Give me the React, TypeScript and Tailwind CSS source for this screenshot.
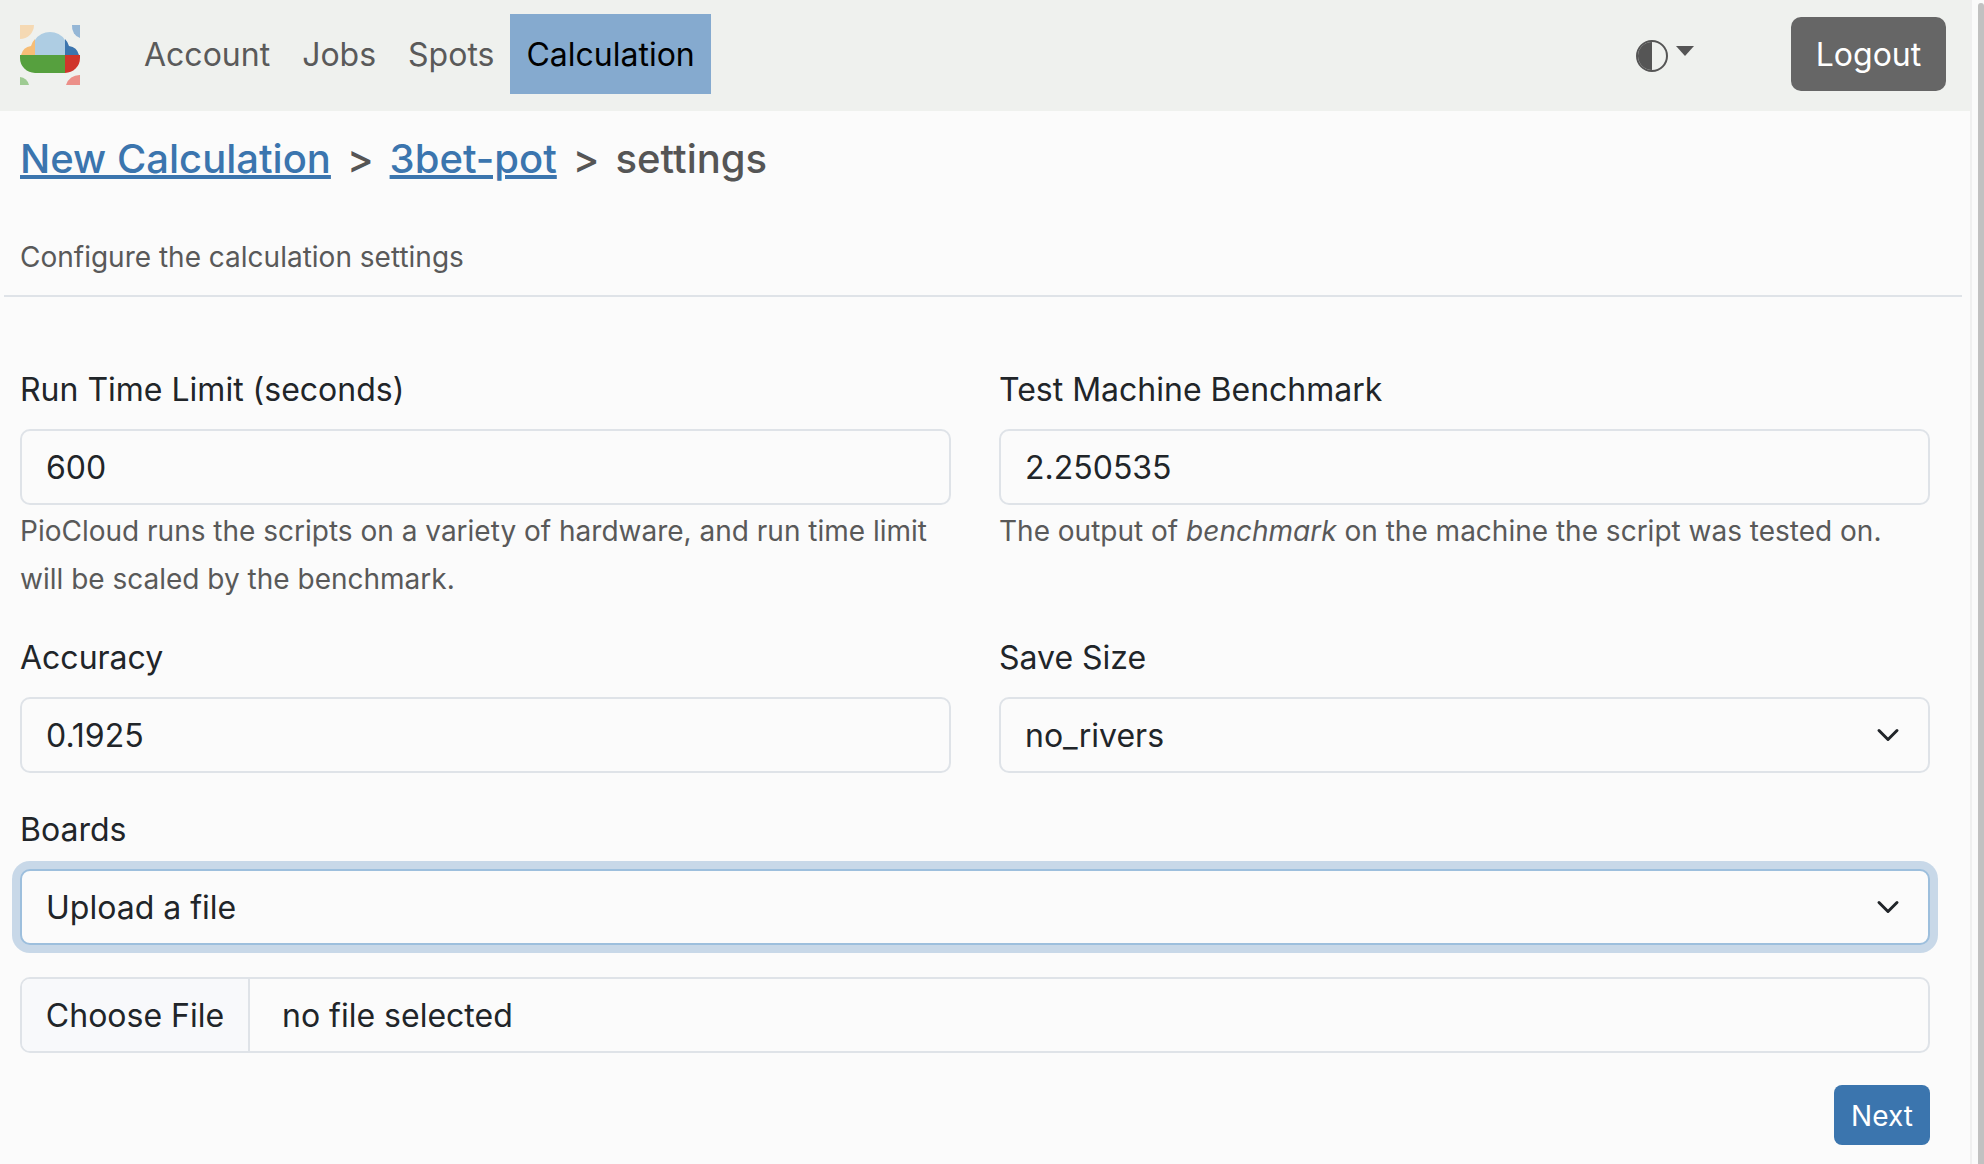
import { ReactNode } from 'react';

const inputClass =
  'block h-[76px] w-full appearance-none rounded-[10px] border-2 border-[#dfe3e8] bg-[#fbfbfb] px-[24px] text-[32px] text-[#212529] outline-none';

function Logo() {
  return (
    <svg viewBox="0 0 60 60" className="mt-[2px] h-[60px] w-[60px]">
      <path d="M0 0h14A14 14 0 0 1 0 14z" fill="#f5d9b3" />
      <path d="M60 0H52A10 12 0 0 0 60 13z" fill="#95b7d6" />
      <path d="M0 60V52A10 10 0 0 1 9 60z" fill="#9ecb92" />
      <path d="M60 60H46A14 14 0 0 1 60 50z" fill="#ec9089" />
      <path d="M15 30V15A18 18 0 0 1 45 15V30z" fill="#aecde3" />
      <path d="M15 30V14q-3 3-4 7Q3 22 1 30z" fill="#f6bd76" />
      <path d="M45 30V14q3 3 4 7 8 1 10 9z" fill="#3c75ae" />
      <path d="M45 30H0v3a15 15 0 0 0 15 15H45z" fill="#56a03e" />
      <path d="M45 30H60v3a15 15 0 0 1-15 15z" fill="#d0352b" />
    </svg>
  );
}

function Chevron() {
  return (
    <svg
      viewBox="0 0 16 16"
      className="pointer-events-none absolute right-[30px] top-1/2 h-[24px] w-[24px] -translate-y-1/2"
      fill="none"
      stroke="#212529"
      strokeWidth="2"
      strokeLinecap="round"
      strokeLinejoin="round"
    >
      <path d="m2 5 6 6 6-6" />
    </svg>
  );
}

function Field({ label, children }: { label: string; children: ReactNode }) {
  return (
    <div>
      <label className="mb-[15px] block text-[32px] leading-[48px] text-[#212529]">{label}</label>
      {children}
    </div>
  );
}

function Select({ value, focused }: { value: string; focused?: boolean }) {
  return (
    <div className="relative">
      <select
        defaultValue={value}
        className={
          focused
            ? 'block h-[76px] w-full appearance-none rounded-[10px] border-2 border-[#9dbfdd] bg-[#fbfbfb] px-[24px] pt-[2px] text-[32px] text-[#212529] shadow-[0_0_0_8px_#c8d8e8] outline-none'
            : 'block h-[76px] w-full appearance-none rounded-[10px] border-2 border-[#dfe3e8] bg-[#fbfbfb] px-[24px] pt-[2px] text-[32px] text-[#212529] outline-none'
        }
      >
        <option>{value}</option>
      </select>
      <Chevron />
    </div>
  );
}

export default function App() {
  return (
    <div className="flex h-screen overflow-hidden bg-[#fbfbfb] font-['Inter',sans-serif]">
      <div className="min-w-0 flex-1">
        <nav className="flex h-[111px] items-center bg-[#eff1ee] pb-[3px] pl-[20px] pr-[24px]">
          <Logo />
          <div className="ml-[48px] flex h-[80px] items-center text-[32px] text-[#5a5a5a]">
            <a className="px-[16px] pt-[2px]">Account</a>
            <a className="px-[16px] pt-[2px]">Jobs</a>
            <a className="px-[16px] pt-[2px]">Spots</a>
            <a className="flex h-full items-center bg-[#85aacf] px-[16px] pt-[2px] text-black">Calculation</a>
          </div>
          <div className="ml-auto mt-[3px] flex items-center">
            <svg viewBox="0 0 16 16" className="h-[32px] w-[32px]" fill="#555">
              <path d="M8 1A7 7 0 1 0 8 15z" />
              <path d="M8 16A8 8 0 1 0 8 0a8 8 0 0 0 0 16m0-1A7 7 0 1 1 8 1a7 7 0 0 1 0 14" />
            </svg>
            <svg viewBox="0 0 18 10" className="mb-[10px] ml-[8px] h-[10px] w-[18px]" fill="#555">
              <path d="M0 0h18L9 10z" />
            </svg>
          </div>
          <button className="ml-[97px] h-[74px] w-[155px] rounded-[10px] bg-[#666] pt-[2px] text-[32px] text-white">
            Logout
          </button>
        </nav>

        <div className="px-[20px] pt-[18px]">
          <div className="flex h-[60px] items-center text-[40px] font-medium text-[#555]">
            <a className="text-[#3b75ae] underline">New Calculation</a>
            <span className="mx-[16px]">&gt;</span>
            <a className="text-[#3b75ae] underline">3bet-pot</a>
            <span className="mx-[16px]">&gt;</span>
            <span>settings</span>
          </div>
          <p className="mt-[44px] text-[28px] leading-[48px] text-[#595959]">Configure the calculation settings</p>
        </div>
        <hr className="ml-[4px] mr-[8px] mt-[14px] border-t-2 border-[#dfe3e8]" />

        <div className="pl-[20px] pr-[40px] pt-[69px]">
          <div className="grid grid-cols-2 gap-x-[48px]">
            <div>
              <Field label="Run Time Limit (seconds)">
                <input readOnly value="600" className={inputClass} />
              </Field>
              <p className="mt-[2px] text-[28px] leading-[48px] text-[#595959]">
                PioCloud runs the scripts on a variety of hardware, and run time limit will be scaled by the benchmark.
              </p>
            </div>
            <div>
              <Field label="Test Machine Benchmark">
                <input readOnly value="2.250535" className={inputClass} />
              </Field>
              <p className="mt-[2px] text-[28px] leading-[48px] text-[#595959]">
                The output of <em>benchmark</em> on the machine the script was tested on.
              </p>
            </div>
          </div>

          <div className="mt-[31px] grid grid-cols-2 gap-x-[48px]">
            <Field label="Accuracy">
              <input readOnly value="0.1925" className={inputClass} />
            </Field>
            <Field label="Save Size">
              <Select value="no_rivers" />
            </Field>
          </div>

          <div className="mt-[33px]">
            <Field label="Boards">
              <Select value="Upload a file" focused />
            </Field>
          </div>

          <div className="mt-[32px] flex h-[76px] items-stretch overflow-hidden rounded-[10px] border-2 border-[#dfe3e8] text-[32px] text-[#212529]">
            <div className="flex w-[228px] items-center justify-center border-r-2 border-[#dfe3e8] bg-[#f8f9fb] pt-[2px]">
              Choose File
            </div>
            <div className="flex items-center pl-[32px] pt-[2px]">no file selected</div>
          </div>

          <div className="mt-[32px] flex justify-end">
            <button className="h-[60px] w-[96px] rounded-[8px] bg-[#3b75ae] pt-[2px] text-[28px] text-white">Next</button>
          </div>
        </div>
      </div>

      <div className="flex w-[14px] shrink-0 border-l-2 border-[#efefef] bg-[#fafafa] pl-[6px] pt-[3px]">
        <div className="h-full w-full rounded-t-[6px] bg-[#c1c1c1]" />
      </div>
    </div>
  );
}
